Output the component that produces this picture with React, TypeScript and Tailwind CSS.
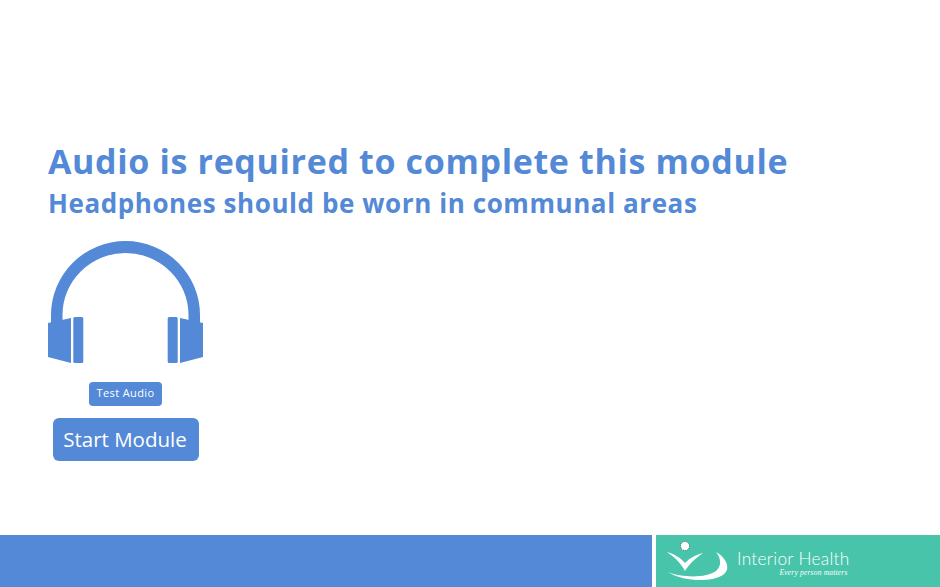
import React from 'react';

const HeadphonesIcon: React.FC = () => (
    <svg width="155" height="124" viewBox="0 0 155 124" className="block" fill="#5389d6">
        {/* headband */}
        <path d="M3 84 V75 A74.5 74 0 0 1 152 75 V84 H140.5 V75 A63 62 0 0 0 14.5 75 V84 Z" />
        {/* left ear */}
        <path d="M0 83 L23 78 V123 L0 117 Z" />
        <rect x="25.3" y="77" width="10" height="46" rx="1.5" />
        {/* right ear */}
        <rect x="119.7" y="77" width="10" height="46" rx="1.5" />
        <path d="M132 78 L155 83 V117 L132 123 Z" />
    </svg>
);

const Logo: React.FC = () => (
    <svg width="68" height="46" viewBox="0 0 68 46" className="block">
        <circle cx="21" cy="8" r="4.5" fill="#ffffff" stroke="#1f4f45" strokeWidth="0.8" strokeDasharray="1 1" />
        <path d="M3 14 C10 16 17 20 21 25 C26 20 31 17 39 15 C32 20 25 26 21 33 C16 24 10 19 3 14 Z" fill="#ffffff" />
        <path d="M52 14 C60 18 70 31 57 38 C46 44 20 44 4 34 C18 40 43 40 52 33 C58 28 57 20 52 14 Z" fill="#ffffff" />
    </svg>
);

const App: React.FC = () => {
    return (
        <div className="w-[940px] h-[587px] bg-white flex flex-col overflow-hidden font-['Open_Sans',sans-serif]">
            <main className="flex-1 pt-[139px] pl-[48px]">
                <h1 className="text-[34px] leading-[44px] font-bold text-[#5389d6] tracking-[0.65px]">
                    Audio is required to complete this module
                </h1>
                <h2 className="text-[26px] leading-[36px] font-bold text-[#5389d6] mt-[2px] tracking-[0.58px]">
                    Headphones should be worn in communal areas
                </h2>

                <div className="w-[155px] mt-[19px] flex flex-col items-center">
                    <HeadphonesIcon />
                    <button className="w-[73px] h-[24px] mt-[18px] pb-[1px] bg-[#5389d6] text-white text-[11px] tracking-[0.4px] rounded-[4px]">
                        Test Audio
                    </button>
                    <button className="w-[146px] h-[43px] mt-[12px] pb-[1px] pr-[1px] bg-[#5389d6] text-white text-[20.5px] rounded-[6px]">
                        Start Module
                    </button>
                </div>
            </main>

            <footer className="h-[52px] flex gap-[4px]">
                <div className="flex-1 bg-[#5389d6]" />
                <div className="w-[284px] bg-[#48c4ab] flex items-center pl-[8px]">
                    <Logo />
                    <div className="ml-[5px] text-white">
                        <div className="text-[17.3px] leading-[20px] font-['Lato',sans-serif] font-light tracking-[0.3px] mt-[4px]">
                            Interior Health
                        </div>
                        <div className="text-[7.5px] leading-[8px] italic text-right tracking-[0.2px] pr-[2px] font-['Liberation_Serif',serif]">
                            Every person matters
                        </div>
                    </div>
                </div>
            </footer>
        </div>
    );
};

export default App;
